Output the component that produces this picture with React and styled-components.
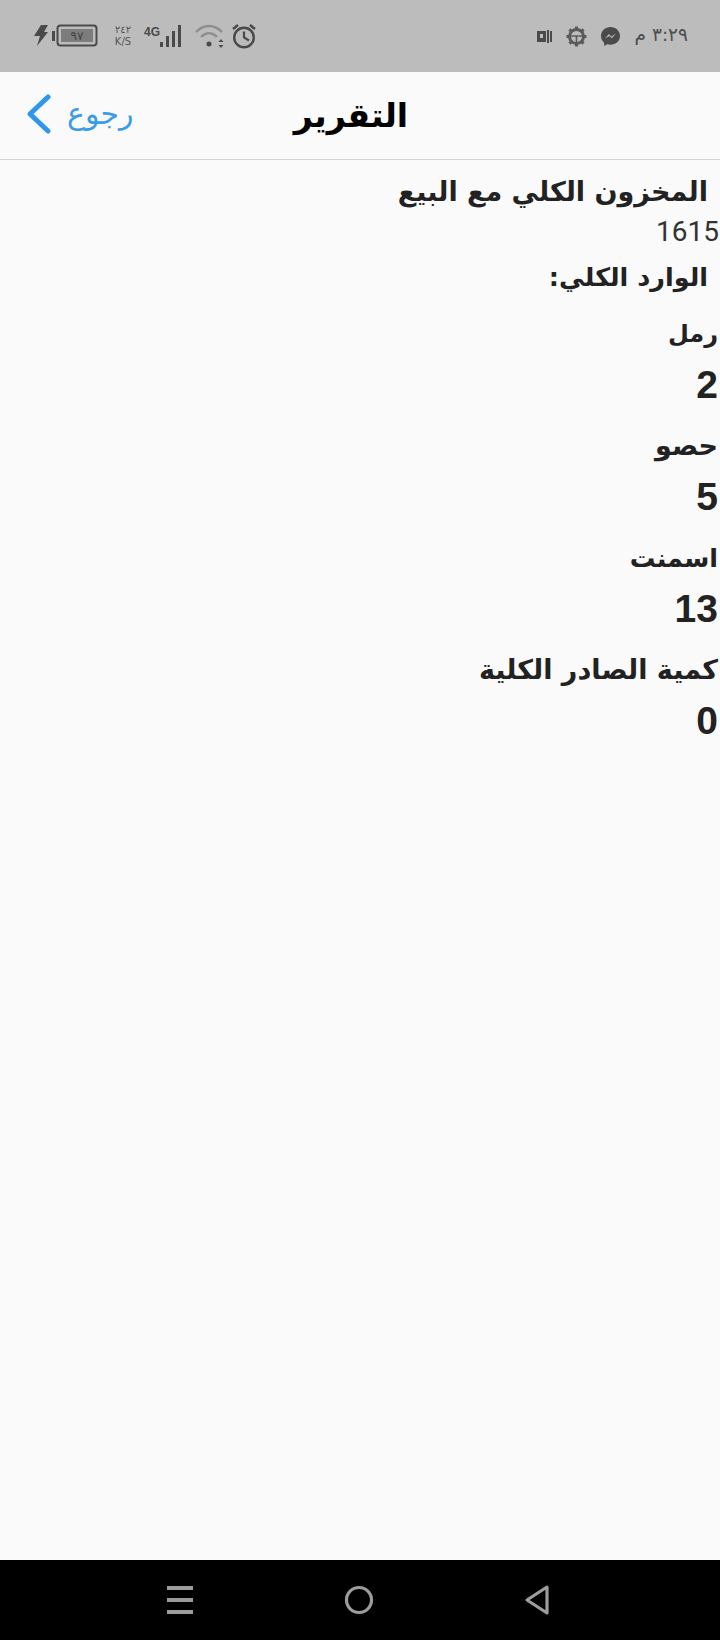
import React from 'react';
import styled, { createGlobalStyle } from 'styled-components';

const GlobalStyle = createGlobalStyle`
  html, body {
    margin: 0;
    padding: 0;
    background: #fafafa;
  }
`;

const Page = styled.div`
  width: 720px;
  height: 1640px;
  display: flex;
  flex-direction: column;
  background: #fafafa;
  overflow: hidden;
`;

const StatusBar = styled.div`
  height: 72px;
  flex: none;
  background: #bcbcbc;
  display: flex;
  align-items: center;
  justify-content: space-between;
  padding: 0 32px 0 33px;
  box-sizing: border-box;
  color: #4a4a4a;
`;

const StatusGroup = styled.div`
  display: flex;
  align-items: center;
  gap: ${(p) => p.$gap || 0}px;
`;

const Speed = styled.div`
  width: 22px;
  margin: 0 10px 0 3px;
  font-family: "DejaVu Sans", sans-serif;
  font-size: 10px;
  line-height: 12px;
  text-align: center;
  color: #555;
`;

const WifiSlot = styled.div`
  display: flex;
  margin: 0 6px 0 13px;
`;

const Clock = styled.span`
  font-family: "DejaVu Sans", sans-serif;
  font-size: 18.5px;
  color: #4d4d4d;
  margin: 0 0 4px 1px;
`;

const NavBar = styled.div`
  height: 88px;
  flex: none;
  box-sizing: border-box;
  border-bottom: 1px solid #d4d4d4;
  display: grid;
  grid-template-columns: 1fr auto 1fr;
  align-items: center;
  padding: 0 44px 0 26px;
  background: #fafafa;
`;

const BackLink = styled.div`
  display: flex;
  align-items: center;
  gap: 15px;
  color: #3a9be8;
  font-family: "DejaVu Sans", sans-serif;
  font-size: 30px;
  line-height: 40px;
  margin-top: -4px;
`;

const Title = styled.div`
  font-family: "DejaVu Sans", sans-serif;
  font-weight: 700;
  font-size: 33px;
  color: #000;
`;

const Content = styled.div`
  flex: 1;
  direction: rtl;
  padding-top: 9px;
  font-family: "DejaVu Sans", sans-serif;
  color: #222;
`;

const Heading = styled.div`
  height: 46px;
  line-height: 46px;
  font-size: ${(p) => p.$size || 27}px;
  font-weight: 700;
  padding-right: ${(p) => p.$indent}px;
  margin-top: ${(p) => p.$top || 0}px;
  white-space: nowrap;
`;

const Plain = styled.div`
  height: 34px;
  line-height: 34px;
  font-family: Roboto, sans-serif;
  font-weight: 400;
  font-size: 28px;
  color: #333;
  padding-right: 1px;
`;

const Reports = styled.div`
  display: flex;
  flex-direction: column;
  gap: 10px;
  padding-top: 11px;
`;

const Amount = styled.div`
  height: 56px;
  line-height: 56px;
  font-family: "Liberation Sans", sans-serif;
  font-weight: 700;
  font-size: 39px;
  padding-right: 2px;
`;

const SoftKeys = styled.div`
  height: 80px;
  flex: none;
  background: #000;
  display: flex;
  align-items: center;
  padding-left: 166px;
  gap: 150px;
`;

const reports = [
  { label: 'رمل', value: '2', size: 24 },
  { label: 'حصو', value: '5', size: 27 },
  { label: 'اسمنت', value: '13', size: 25.5 },
  { label: 'كمية الصادر الكلية', value: '0', size: 27 },
];

function Battery() {
  return (
    <svg width="76" height="24" viewBox="0 0 76 24">
      <path d="M8 1 H15 L11 8 H15 L4 22 L7 12 H1 Z" fill="#4a4a4a" />
      <rect x="19" y="7" width="3" height="10" fill="#4a4a4a" />
      <rect x="24.5" y="1.5" width="39" height="20" rx="3" fill="none" stroke="#4a4a4a" strokeWidth="2" />
      <rect x="28" y="5" width="32" height="13" fill="#7c7c7c" />
      <text x="44" y="16" textAnchor="middle" fontFamily="DejaVu Sans" fontSize="12" fill="#444">٩٧</text>
    </svg>
  );
}

function Signal() {
  return (
    <svg width="38" height="24" viewBox="0 0 38 24">
      <text x="0" y="12" fontFamily="Liberation Sans" fontWeight="700" fontSize="12" fill="#4a4a4a">4G</text>
      <rect x="16" y="18" width="3" height="5" fill="#4a4a4a" />
      <rect x="22" y="12" width="3" height="11" fill="#4a4a4a" />
      <rect x="28" y="7" width="3" height="16" fill="#4a4a4a" />
      <rect x="34" y="1" width="3" height="22" fill="#4a4a4a" />
    </svg>
  );
}

function Wifi() {
  return (
    <svg width="30" height="24" viewBox="0 0 30 24" fill="none">
      <path d="M1 8 C9 0 19 0 27 8" stroke="#8e8e8e" strokeWidth="2.4" />
      <path d="M6 13 C11 8 17 8 22 13" stroke="#8e8e8e" strokeWidth="2.4" />
      <circle cx="14" cy="20" r="2.5" fill="#4a4a4a" />
      <path d="M26 15 L28.5 18 H23.5 Z M26 24 L23.5 21 H28.5 Z" fill="#4a4a4a" />
    </svg>
  );
}

function Alarm() {
  return (
    <svg width="26" height="26" viewBox="0 0 26 26" fill="none" stroke="#4a4a4a">
      <circle cx="13" cy="14.5" r="9.8" strokeWidth="2.4" />
      <path d="M13 8.5 V14.5 L18 17.5" strokeWidth="2.2" />
      <path d="M2 6 L7 2 M24 6 L19 2" strokeWidth="2.6" />
    </svg>
  );
}

function PagesIcon() {
  return (
    <svg width="15" height="15" viewBox="0 0 15 15">
      <rect x="0" y="2" width="9" height="11" fill="#4a4a4a" />
      <rect x="3" y="5" width="3" height="4" fill="#bcbcbc" />
      <rect x="10" y="1" width="2" height="13" fill="#4a4a4a" />
      <rect x="13" y="2" width="2" height="11" fill="#4a4a4a" />
    </svg>
  );
}

function GearIcon() {
  const teeth = [0, 45, 90, 135, 180, 225, 270, 315];
  return (
    <svg width="21" height="21" viewBox="0 0 21 21" fill="none" stroke="#5a5a5a">
      <circle cx="10.5" cy="10.5" r="7" strokeWidth="3" />
      {teeth.map((a) => (
        <path key={a} d="M10.5 0.5 V3.5" strokeWidth="3" transform={`rotate(${a} 10.5 10.5)`} />
      ))}
      <path d="M4 10 H17 M10.5 10 V17" strokeWidth="1.6" />
    </svg>
  );
}

function MessengerIcon() {
  return (
    <svg width="19" height="19" viewBox="0 0 19 19">
      <path d="M9.5 0 C4.2 0 0 3.9 0 9 C0 11.8 1.2 14.1 3.2 15.7 V19 L6.2 17.3 C7.2 17.6 8.3 17.8 9.5 17.8 C14.8 17.8 19 13.9 19 9 C19 3.9 14.8 0 9.5 0 Z" fill="#4a4a4a" />
      <path d="M3.8 11.5 L8 7 L10.3 9.4 L15 6.5 L10.8 11.2 L8.5 8.9 Z" fill="#bcbcbc" />
    </svg>
  );
}

function Chevron() {
  return (
    <svg width="26" height="40" viewBox="0 0 26 40" fill="none">
      <path d="M22 3 L4 20 L22 37" stroke="#2d96ee" strokeWidth="5" strokeLinecap="round" strokeLinejoin="round" />
    </svg>
  );
}

function SoftKeyMenu() {
  return (
    <svg width="28" height="30" viewBox="0 0 28 30">
      <rect x="1" y="1" width="26" height="4" fill="#9c9c9c" />
      <rect x="1" y="13" width="26" height="4" fill="#9c9c9c" />
      <rect x="1" y="25" width="26" height="4" fill="#9c9c9c" />
    </svg>
  );
}

function SoftKeyHome() {
  return (
    <svg width="30" height="30" viewBox="0 0 30 30" fill="none">
      <circle cx="15" cy="15" r="12.5" stroke="#9c9c9c" strokeWidth="3.2" />
    </svg>
  );
}

function SoftKeyBack() {
  return (
    <svg width="26" height="32" viewBox="0 0 26 32" fill="none">
      <path d="M23 3 L3 16 L23 29 Z" stroke="#9c9c9c" strokeWidth="3.2" strokeLinejoin="round" />
    </svg>
  );
}

export default function App() {
  return (
    <Page>
      <GlobalStyle />
      <StatusBar>
        <StatusGroup>
          <Battery />
          <Speed>
            ٢٤٢
            <br />
            K/S
          </Speed>
          <Signal />
          <WifiSlot>
            <Wifi />
          </WifiSlot>
          <Alarm />
        </StatusGroup>
        <StatusGroup $gap={14}>
          <PagesIcon />
          <GearIcon />
          <MessengerIcon />
          <Clock>٣:٢٩ م</Clock>
        </StatusGroup>
      </StatusBar>
      <NavBar>
        <BackLink>
          <Chevron />
          <span>رجوع</span>
        </BackLink>
        <Title>التقرير</Title>
      </NavBar>
      <Content>
        <Heading $indent={12}>المخزون الكلي مع البيع</Heading>
        <Plain>1615</Plain>
        <Heading $indent={12} $size={25.5} $top={5}>الوارد الكلي:</Heading>
        <Reports>
          {reports.map((r) => (
            <div key={r.label}>
              <Heading $indent={2} $size={r.size}>{r.label}</Heading>
              <Amount>{r.value}</Amount>
            </div>
          ))}
        </Reports>
      </Content>
      <SoftKeys>
        <SoftKeyMenu />
        <SoftKeyHome />
        <SoftKeyBack />
      </SoftKeys>
    </Page>
  );
}
